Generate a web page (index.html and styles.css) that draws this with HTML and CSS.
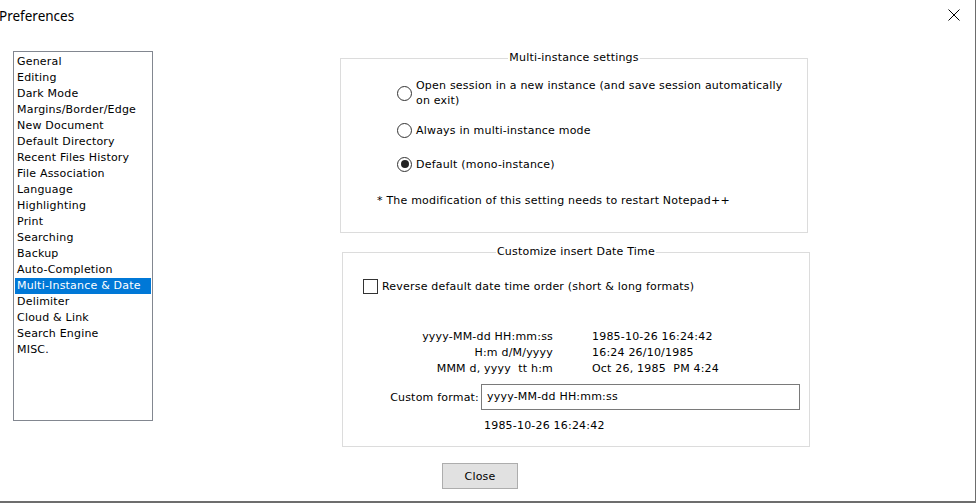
FILE: index.html
```html
<html>
<head>
    <title>Preferences</title>
    <link rel="stylesheet" href="styles.css">
</head>
<body>
<div class="window">
    <div class="titlebar">
        <span class="title">Preferences</span>
        <span class="close-x">
            <svg width="12" height="12" viewBox="0 0 12 12">
                <path d="M0.5 0.5 L11.5 11.5 M11.5 0.5 L0.5 11.5" stroke="#000" stroke-width="1" fill="none"/>
            </svg>
        </span>
    </div>
    <div class="content">
        <ul class="sidebar">
            <li>General</li>
            <li>Editing</li>
            <li>Dark Mode</li>
            <li>Margins/Border/Edge</li>
            <li>New Document</li>
            <li>Default Directory</li>
            <li>Recent Files History</li>
            <li>File Association</li>
            <li>Language</li>
            <li>Highlighting</li>
            <li>Print</li>
            <li>Searching</li>
            <li>Backup</li>
            <li>Auto-Completion</li>
            <li class="selected">Multi-Instance &amp; Date</li>
            <li>Delimiter</li>
            <li>Cloud &amp; Link</li>
            <li>Search Engine</li>
            <li>MISC.</li>
        </ul>
        <div class="main">
            <fieldset class="group group-instance">
                <legend>Multi-instance settings</legend>
                <label class="radio-row first">
                    <span class="radio"></span>
                    <span>Open session in a new instance (and save session automatically<br>on exit)</span>
                </label>
                <label class="radio-row">
                    <span class="radio"></span>
                    <span>Always in multi-instance mode</span>
                </label>
                <label class="radio-row">
                    <span class="radio checked"></span>
                    <span>Default (mono-instance)</span>
                </label>
                <p class="note">* The modification of this setting needs to restart Notepad++</p>
            </fieldset>
            <fieldset class="group group-date">
                <legend>Customize insert Date Time</legend>
                <label class="check-row">
                    <span class="checkbox"></span>
                    <span>Reverse default date time order (short &amp; long formats)</span>
                </label>
                <div class="formats">
                    <span class="fmt">yyyy-MM-dd HH:mm:ss</span><span>1985-10-26 16:24:42</span>
                    <span class="fmt">H:m d/M/yyyy</span><span>16:24 26/10/1985</span>
                    <span class="fmt">MMM d, yyyy&nbsp; tt h:m</span><span>Oct 26, 1985&nbsp; PM 4:24</span>
                </div>
                <div class="custom-row">
                    <span class="custom-label">Custom format:</span>
                    <div class="textbox">yyyy-MM-dd HH:mm:ss</div>
                </div>
                <div class="preview">1985-10-26 16:24:42</div>
            </fieldset>
            <button class="close-btn">Close</button>
        </div>
    </div>
</div>
</body>
</html>
```

FILE: styles.css
```css
body {
  margin: 0;
  background: #fff;
  font-family: "DejaVu Sans", Verdana, sans-serif;
  font-size: 11px;
  letter-spacing: 0.2px;
  color: #000;
}

.window {
  width: 976px;
  height: 503px;
  box-sizing: border-box;
  border-right: 1px solid #6d6d6d;
  border-bottom: 2px solid #6d6d6d;
  overflow: hidden;
}

.titlebar {
  height: 30px;
  display: flex;
  align-items: center;
  justify-content: space-between;
}

.title {
  font-family: "Noto Sans", "Open Sans", sans-serif;
  font-size: 13.5px;
  letter-spacing: 0;
  margin-left: -1px;
  margin-top: 1px;
}

.close-x {
  display: flex;
  margin-right: 15px;
}

.content {
  display: flex;
  padding-top: 21px;
}

/* left category list */
.sidebar {
  list-style: none;
  margin: 0 0 0 13px;
  padding: 2px 1px;
  width: 140px;
  height: 370px;
  box-sizing: border-box;
  border: 1px solid #828790;
}

.sidebar li {
  height: 16px;
  line-height: 16px;
  padding-left: 2px;
  white-space: nowrap;
}

.sidebar li.selected {
  background: #0078d7;
  color: #fff;
}

.main {
  margin-left: 187px;
  display: flex;
  flex-direction: column;
  align-items: flex-start;
}

/* group boxes */
.group {
  margin: 0;
  padding: 0;
  border: 1px solid #dcdcdc;
  box-sizing: border-box;
  width: 468px;
}

.group legend {
  margin: 0 auto;
  padding: 0 1px;
  line-height: 14px;
}

.group-instance {
  height: 182px;
}

.group-date {
  margin-top: 12px;
  margin-left: 2px;
  height: 202px;
}

.radio-row {
  display: flex;
  align-items: center;
  margin-left: 56px;
  line-height: 15px;
  height: 30px;
}

.radio-row.first {
  margin-top: 13px;
}

.radio-row + .radio-row {
  margin-top: 7px;
}

.radio-row + .radio-row + .radio-row {
  margin-top: 4px;
}

.radio {
  width: 13px;
  height: 13px;
  border: 1px solid #333;
  border-radius: 50%;
  margin-right: 4px;
  flex: none;
  position: relative;
}

.radio.checked::after {
  content: "";
  position: absolute;
  left: 2.5px;
  top: 2.5px;
  width: 8px;
  height: 8px;
  border-radius: 50%;
  background: #222;
}

.note {
  margin: 14px 0 0 36px;
  line-height: 15px;
}

.check-row {
  display: flex;
  align-items: center;
  margin: 19px 0 0 20px;
  height: 16px;
}

.checkbox {
  width: 13px;
  height: 13px;
  border: 1px solid #333;
  margin-right: 4px;
}

.formats {
  display: grid;
  grid-template-columns: 210px auto;
  column-gap: 39px;
  line-height: 16px;
  margin-top: 35px;
}

.fmt {
  text-align: right;
}

.custom-row {
  display: flex;
  align-items: center;
  margin-top: 7px;
}

.custom-label {
  width: 136px;
  text-align: right;
  margin-right: 2px;
}

.textbox {
  width: 319px;
  height: 26px;
  box-sizing: border-box;
  border: 1px solid #7a7a7a;
  padding-left: 5px;
  line-height: 24px;
}

.preview {
  margin: 8px 0 0 141px;
  line-height: 16px;
}

.close-btn {
  margin: 16px 0 0 102px;
  width: 76px;
  height: 26px;
  background: #e1e1e1;
  border: 1px solid #adadad;
  font-family: inherit;
  font-size: inherit;
  letter-spacing: inherit;
  color: #000;
  padding: 0;
}
```
